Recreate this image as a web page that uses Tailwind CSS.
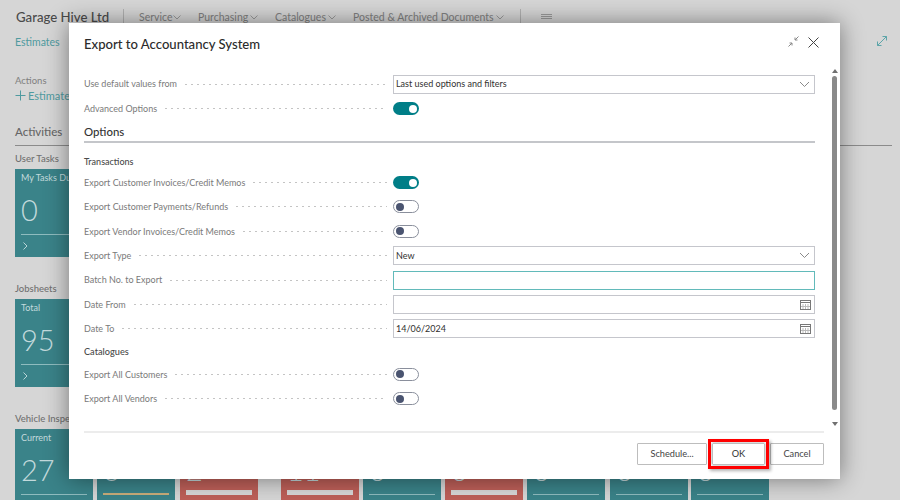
<!DOCTYPE html>
<html>
  <head>
    <meta charset="UTF-8" />
    <title>Export to Accountancy System</title>
    <script src="https://cdn.jsdelivr.net/npm/@tailwindcss/browser@4"></script>
  </head>
  <body class="bg-[#d6d6d6] font-['Lato',sans-serif] text-[#605e5c] w-[900px] h-[500px] relative overflow-hidden">
    <!-- page behind the dialog -->
    <div class="pl-[15px] pr-[8px] flex flex-col">
      <header class="h-[35px] flex items-center">
        <span class="text-[13.2px] font-medium text-[#4a4a4a] w-[108px] pl-[1px]">Garage Hive Ltd</span>
        <span class="w-px h-[17px] bg-[#b0b0b0] mr-[15px]"></span>
        <nav class="flex gap-[9px] text-[10.5px] text-[#808080] w-[381px]">
          <span class="w-[50px] flex items-center gap-[1px]">Service<svg class="w-[8px] h-[5px]" viewBox="0 0 8 5" fill="none" stroke="#999"><path d="M0.5 0.5L4 4l3.5-3.5"/></svg></span>
          <span class="w-[68px] flex items-center gap-[2px]">Purchasing<svg class="w-[8px] h-[5px]" viewBox="0 0 8 5" fill="none" stroke="#999"><path d="M0.5 0.5L4 4l3.5-3.5"/></svg></span>
          <span class="w-[69px] flex items-center gap-[2px]">Catalogues<svg class="w-[8px] h-[5px]" viewBox="0 0 8 5" fill="none" stroke="#999"><path d="M0.5 0.5L4 4l3.5-3.5"/></svg></span>
          <span class="flex items-center gap-[2px]">Posted &amp; Archived Documents<svg class="w-[8px] h-[5px]" viewBox="0 0 8 5" fill="none" stroke="#999"><path d="M0.5 0.5L4 4l3.5-3.5"/></svg></span>
        </nav>
        <span class="w-px h-[17px] bg-[#b0b0b0] mr-[20px]"></span>
        <svg class="w-[11px] h-[5px] -mt-[2px]" viewBox="0 0 11 5" stroke="#999"><path d="M0 0.5h11M0 2.5h11M0 4.5h11"/></svg>
      </header>
      <div class="flex justify-between items-start h-[39px]">
        <p class="text-[10.5px] text-[#4f9a9f]">Estimates</p>
        <svg class="w-[12px] h-[12px] mr-[4px]" viewBox="0 0 12 12" fill="none" stroke="#5da5a9"><path d="M1.5 10.5l9-9M6.5 1.5h4v4M1.5 6.5v4h4"/></svg>
      </div>
      <p class="text-[9.5px] text-[#808080] h-[14px]">Actions</p>
      <p class="text-[11px] text-[#4f9a9f] h-[26px] flex items-start gap-[2px]"><svg class="w-[11px] h-[11px] mt-[2px]" viewBox="0 0 11 11" stroke="#4f9a9f"><path d="M5.5 0.5v10M0.5 5.5h10"/></svg>Estimate</p>
      <p class="text-[11.5px] font-medium text-[#666] h-[32px] border-b border-[#8b8b8b] flex items-end pb-[5px]">Activities</p>
      <p class="text-[9.5px] font-medium text-[#707070] mt-[6px] h-[17px]">User Tasks</p>
      <div class="w-[78px] h-[88px] bg-[#3a8389] text-[#c3dadc] text-[9px] px-[6px] pt-[2px] flex flex-col">My Tasks Due<p class="text-[29px] font-light leading-[41px] mt-[4px] h-[46.5px] border-b border-[#8fbcbf]">0</p>
        <svg class="w-[5px] h-[8px] mt-[7px] ml-[2px]" viewBox="0 0 5 8" fill="none" stroke="#b8d5d7"><path d="M0.5 0.5L4 4 0.5 7.5"/></svg></div>
      <p class="text-[9.5px] font-medium text-[#707070] mt-[25px] h-[17px]">Jobsheets</p>
      <div class="w-[78px] h-[88px] bg-[#3a8389] text-[#c3dadc] text-[9px] px-[6px] pt-[2px] flex flex-col">Total<p class="text-[29px] font-light leading-[41px] mt-[4px] h-[46.5px] border-b border-[#8fbcbf]">95</p>
        <svg class="w-[5px] h-[8px] mt-[7px] ml-[2px]" viewBox="0 0 5 8" fill="none" stroke="#b8d5d7"><path d="M0.5 0.5L4 4 0.5 7.5"/></svg></div>
      <p class="text-[9.5px] font-medium text-[#707070] mt-[25px] h-[17px]">Vehicle Inspections</p>
      <div class="flex h-[71px] text-[#c3dadc] text-[9px]">
        <div class="w-[78px] bg-[#3a8389] px-[6px] pt-[2px]">Current<p class="text-[29px] font-light leading-[41px] mt-[4px] h-[46.5px] border-b border-[#8fbcbf]">27</p></div>
        <div class="w-[78px] ml-[4px] bg-[#3a8389] px-[6px] pt-[2px]"><p class="text-[29px] font-light leading-[41px] mt-[17.5px] h-[46.5px] border-b-2 border-[#c9ad7a]">6</p></div>
        <div class="w-[78px] ml-[5px] bg-[#bd5f58] px-[6px] pt-[2px]"><p class="text-[29px] font-light leading-[41px] mt-[17.5px] h-[46.5px] border-b-[5px] border-[#d8d8d8]">2</p></div>
        <div class="w-[78px] ml-[23px] bg-[#bd5f58] px-[6px] pt-[2px]"><p class="text-[29px] font-light leading-[41px] mt-[17.5px] h-[46.5px] border-b-[5px] border-[#d8d8d8]">11</p></div>
        <div class="w-[78px] ml-[4px] bg-[#3a8389] px-[6px] pt-[2px]"><p class="text-[29px] font-light leading-[41px] mt-[17.5px] h-[46.5px] border-b border-[#8fbcbf]">0</p></div>
        <div class="w-[78px] ml-[4px] bg-[#bd5f58] px-[6px] pt-[2px]"><p class="text-[29px] font-light leading-[41px] mt-[17.5px] h-[46.5px] border-b-[5px] border-[#d8d8d8]">0</p></div>
        <div class="w-[78px] ml-[4px] bg-[#3a8389] px-[6px] pt-[2px]"><p class="text-[29px] font-light leading-[41px] mt-[17.5px] h-[46.5px] border-b border-[#8fbcbf]">0</p></div>
        <div class="w-[78px] ml-[5px] bg-[#3a8389] px-[6px] pt-[2px]"><p class="text-[29px] font-light leading-[41px] mt-[17.5px] h-[46.5px] border-b border-[#8fbcbf]">0</p></div>
        <div class="w-[78px] ml-[3px] bg-[#3a8389] px-[6px] pt-[2px]"><p class="text-[29px] font-light leading-[41px] mt-[17.5px] h-[46.5px] border-b border-[#8fbcbf]">0</p></div>
      </div>
    </div>

    <!-- dialog -->
    <section class="absolute left-[69px] top-[23px] w-[771px] h-[456px] bg-white shadow-[0_0_22px_rgba(0,0,0,0.45)] flex flex-col pl-[15px] pr-[25px]">
      <div class="h-[34px] flex items-end justify-between">
        <h1 class="text-[13.1px] font-medium text-[#2b2b2b] leading-[26px]">Export to Accountancy System</h1>
      </div>
      <div class="mt-[15px] w-[731px] text-[9px] text-[#7a7a7a]">
        <div class="grid grid-cols-[309px_422px] items-center h-[24.4px]">
          <div class="flex items-center gap-[6px] pr-[6px]"><span>Use default values from</span><i class="flex-1 h-[3px] bg-[radial-gradient(circle,#c4c4c4_0.7px,transparent_1px)] bg-[length:6px_3px]"></i></div>
          <div class="h-[19px] border border-[#c5c6cc] text-[#323130] flex items-center justify-between pl-[2px] pr-[2px]">Last used options and filters<svg class="w-[11px] h-[7px] mr-[2px]" viewBox="0 0 11 7" fill="none" stroke="#8a8a8a"><path d="M1 1l4.5 4.5L10 1"/></svg></div>
        </div>
        <div class="grid grid-cols-[309px_422px] items-center h-[24.4px]">
          <div class="flex items-center gap-[6px] pr-[6px]"><span>Advanced Options</span><i class="flex-1 h-[3px] bg-[radial-gradient(circle,#c4c4c4_0.7px,transparent_1px)] bg-[length:6px_3px]"></i></div>
          <div class="w-[26px] h-[13px] rounded-full bg-[#007e87] flex items-center justify-end pr-[2px]"><b class="w-[8px] h-[8px] rounded-full bg-white"></b></div>
        </div>
        <h2 class="text-[11.4px] font-medium text-[#333] h-[22px] leading-[22px] border-b-2 border-[#c4c6ca]">Options</h2>
        <h3 class="text-[9px] font-medium text-[#4a4a4a] mt-[11px] h-[16.6px] leading-[15px]">Transactions</h3>
        <div class="grid grid-cols-[309px_422px] items-center h-[24.4px]">
          <div class="flex items-center gap-[6px] pr-[6px]"><span>Export Customer Invoices/Credit Memos</span><i class="flex-1 h-[3px] bg-[radial-gradient(circle,#c4c4c4_0.7px,transparent_1px)] bg-[length:6px_3px]"></i></div>
          <div class="w-[26px] h-[13px] rounded-full bg-[#007e87] flex items-center justify-end pr-[2px]"><b class="w-[8px] h-[8px] rounded-full bg-white"></b></div>
        </div>
        <div class="grid grid-cols-[309px_422px] items-center h-[24.4px]">
          <div class="flex items-center gap-[6px] pr-[6px]"><span>Export Customer Payments/Refunds</span><i class="flex-1 h-[3px] bg-[radial-gradient(circle,#c4c4c4_0.7px,transparent_1px)] bg-[length:6px_3px]"></i></div>
          <div class="w-[26px] h-[13px] rounded-full border border-[#8a8f9c] flex items-center pl-[2px]"><b class="w-[8px] h-[8px] rounded-full bg-[#4a5470]"></b></div>
        </div>
        <div class="grid grid-cols-[309px_422px] items-center h-[24.4px]">
          <div class="flex items-center gap-[6px] pr-[6px]"><span>Export Vendor Invoices/Credit Memos</span><i class="flex-1 h-[3px] bg-[radial-gradient(circle,#c4c4c4_0.7px,transparent_1px)] bg-[length:6px_3px]"></i></div>
          <div class="w-[26px] h-[13px] rounded-full border border-[#8a8f9c] flex items-center pl-[2px]"><b class="w-[8px] h-[8px] rounded-full bg-[#4a5470]"></b></div>
        </div>
        <div class="grid grid-cols-[309px_422px] items-center h-[24.4px]">
          <div class="flex items-center gap-[6px] pr-[6px]"><span>Export Type</span><i class="flex-1 h-[3px] bg-[radial-gradient(circle,#c4c4c4_0.7px,transparent_1px)] bg-[length:6px_3px]"></i></div>
          <div class="h-[19px] border border-[#c5c6cc] text-[#323130] flex items-center justify-between pl-[2px] pr-[2px]">New<svg class="w-[11px] h-[7px] mr-[2px]" viewBox="0 0 11 7" fill="none" stroke="#8a8a8a"><path d="M1 1l4.5 4.5L10 1"/></svg></div>
        </div>
        <div class="grid grid-cols-[309px_422px] items-center h-[24.4px]">
          <div class="flex items-center gap-[6px] pr-[6px]"><span>Batch No. to Export</span><i class="flex-1 h-[3px] bg-[radial-gradient(circle,#c4c4c4_0.7px,transparent_1px)] bg-[length:6px_3px]"></i></div>
          <div class="h-[19px] border border-[#62baba]"></div>
        </div>
        <div class="grid grid-cols-[309px_422px] items-center h-[24.4px]">
          <div class="flex items-center gap-[6px] pr-[6px]"><span>Date From</span><i class="flex-1 h-[3px] bg-[radial-gradient(circle,#c4c4c4_0.7px,transparent_1px)] bg-[length:6px_3px]"></i></div>
          <div class="h-[19px] border border-[#c5c6cc] flex items-center justify-end pr-[3px]"><svg class="w-[11px] h-[11px]" viewBox="0 0 11 11" fill="none" stroke="#777"><rect x="0.5" y="1.5" width="10" height="9"/><path d="M1 3.5h9" /><path d="M3 5v5M5.5 5v5M8 5v5M1 7.5h9" stroke="#bbb"/></svg></div>
        </div>
        <div class="grid grid-cols-[309px_422px] items-center h-[24.4px]">
          <div class="flex items-center gap-[6px] pr-[6px]"><span>Date To</span><i class="flex-1 h-[3px] bg-[radial-gradient(circle,#c4c4c4_0.7px,transparent_1px)] bg-[length:6px_3px]"></i></div>
          <div class="h-[19px] border border-[#c5c6cc] text-[#323130] flex items-center justify-between pl-[2px] pr-[3px]">14/06/2024<svg class="w-[11px] h-[11px]" viewBox="0 0 11 11" fill="none" stroke="#777"><rect x="0.5" y="1.5" width="10" height="9"/><path d="M1 3.5h9" /><path d="M3 5v5M5.5 5v5M8 5v5M1 7.5h9" stroke="#bbb"/></svg></div>
        </div>
        <h3 class="text-[9.2px] font-medium text-[#4a4a4a] mt-[3px] h-[18px] leading-[15px]">Catalogues</h3>
        <div class="grid grid-cols-[309px_422px] items-center h-[24.4px]">
          <div class="flex items-center gap-[6px] pr-[6px]"><span>Export All Customers</span><i class="flex-1 h-[3px] bg-[radial-gradient(circle,#c4c4c4_0.7px,transparent_1px)] bg-[length:6px_3px]"></i></div>
          <div class="w-[26px] h-[13px] rounded-full border border-[#8a8f9c] flex items-center pl-[2px]"><b class="w-[8px] h-[8px] rounded-full bg-[#4a5470]"></b></div>
        </div>
        <div class="grid grid-cols-[309px_422px] items-center h-[24.4px]">
          <div class="flex items-center gap-[6px] pr-[6px]"><span>Export All Vendors</span><i class="flex-1 h-[3px] bg-[radial-gradient(circle,#c4c4c4_0.7px,transparent_1px)] bg-[length:6px_3px]"></i></div>
          <div class="w-[26px] h-[13px] rounded-full border border-[#8a8f9c] flex items-center pl-[2px]"><b class="w-[8px] h-[8px] rounded-full bg-[#4a5470]"></b></div>
        </div>
      </div>
      <footer class="mt-auto h-[48px] border-t-2 border-[#ececec] w-[740px] flex items-start justify-end gap-[5px] pt-[10px] text-[9.2px] text-[#444]">
        <button class="w-[70px] h-[22px] border border-[#bdbdbd] rounded-[1px]">Schedule...</button>
        <button class="w-[53px] h-[22px] border border-[#bdbdbd] rounded-[1px] font-medium shadow-[0_0_3px_rgba(0,0,0,0.4)]">OK</button>
        <button class="w-[54px] h-[22px] border border-[#bdbdbd] rounded-[1px]">Cancel</button>
      </footer>
      <!-- header icons, scrollbar and callout sit over the dialog -->
      <svg class="absolute left-[719px] top-[13px] w-[11px] h-[11px]" viewBox="0 0 11 11" fill="none" stroke="#888"><path d="M10.5 0.5L7 4M7 1.5V4h2.5M0.5 10.5L4 7M1.5 7H4v2.5"/></svg>
      <svg class="absolute left-[739px] top-[14px] w-[11px] h-[11px]" viewBox="0 0 11 11" fill="none" stroke="#444"><path d="M0.5 0.5l10 10M10.5 0.5l-10 10"/></svg>
      <div class="absolute left-[763px] top-[46px] w-0 h-0 border-x-[3px] border-x-transparent border-b-[4px] border-b-[#707070]"></div>
      <div class="absolute left-[763px] top-[53px] w-[5px] h-[334px] rounded-full bg-[#8a8a8a]"></div>
      <div class="absolute left-[763px] top-[399px] w-0 h-0 border-x-[3px] border-x-transparent border-t-[4px] border-t-[#707070]"></div>
      <div class="absolute left-[639px] top-[416px] w-[61px] h-[30px] border-[3px] border-[#ff0000] shadow-[2px_2px_3px_rgba(0,0,0,0.3)]"></div>
    </section>
  </body>
</html>
